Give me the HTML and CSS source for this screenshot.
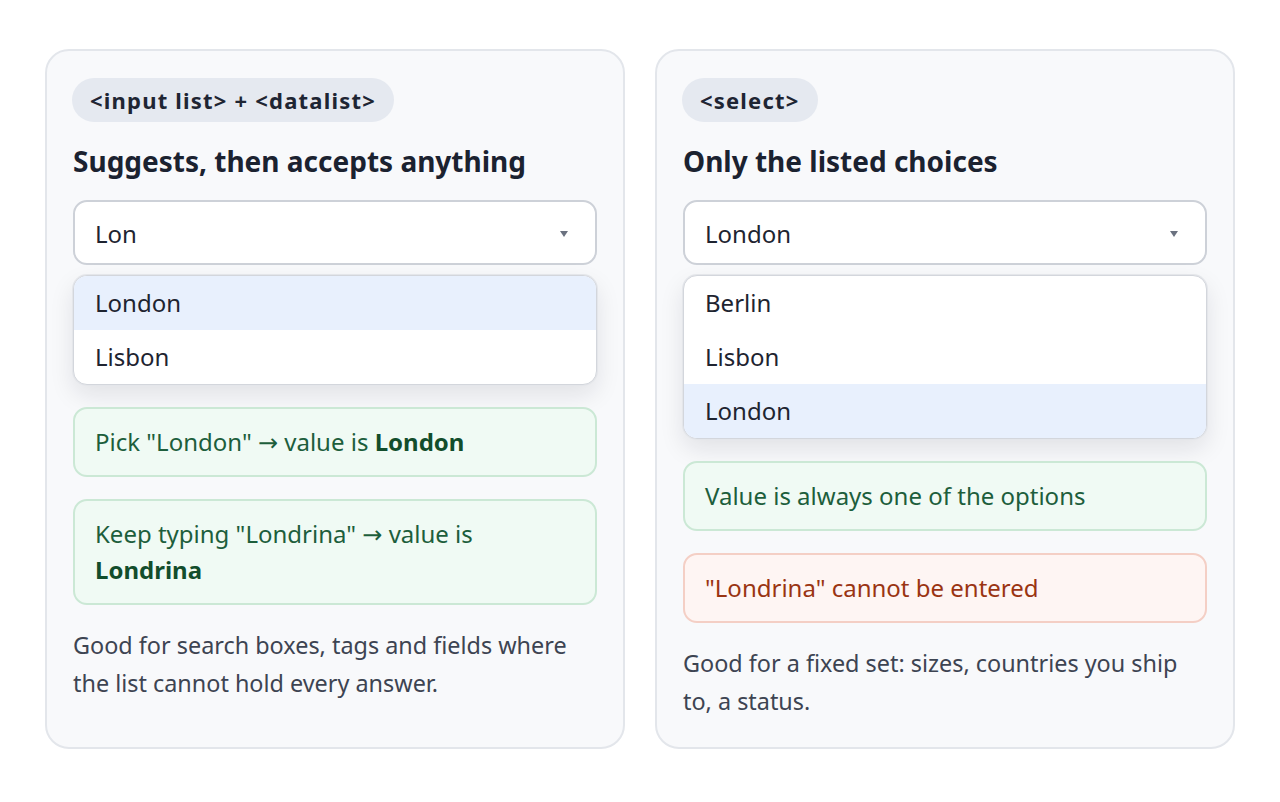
FILE: index.html
```html
<!DOCTYPE html>
<html lang="en">
<head>
<meta charset="utf-8">
<title>datalist vs select</title>
<link rel="stylesheet" href="styles.css">
</head>
<body>
<main class="compare">
  <section class="card">
    <span class="badge">&lt;input list&gt; + &lt;datalist&gt;</span>
    <h2 class="title">Suggests, then accepts anything</h2>
    <div class="field">
      <span class="field-value">Lon</span>
      <svg class="caret" width="10" height="8" viewBox="0 0 10 8"><polygon points="1,1 9,1 5,7" fill="#6b7280"/></svg>
    </div>
    <ul class="menu">
      <li class="option active">London</li>
      <li class="option">Lisbon</li>
    </ul>
    <div class="note ok">Pick "London" → value is <b>London</b></div>
    <div class="note ok">Keep typing "Londrina" → value is <b>Londrina</b></div>
    <p class="desc">Good for search boxes, tags and fields where the list cannot hold every answer.</p>
  </section>
  <section class="card">
    <span class="badge">&lt;select&gt;</span>
    <h2 class="title">Only the listed choices</h2>
    <div class="field">
      <span class="field-value">London</span>
      <svg class="caret" width="10" height="8" viewBox="0 0 10 8"><polygon points="1,1 9,1 5,7" fill="#6b7280"/></svg>
    </div>
    <ul class="menu">
      <li class="option">Berlin</li>
      <li class="option">Lisbon</li>
      <li class="option active">London</li>
    </ul>
    <div class="note ok">Value is always one of the options</div>
    <div class="note bad">"Londrina" cannot be entered</div>
    <p class="desc">Good for a fixed set: sizes, countries you ship to, a status.</p>
  </section>
</main>
</body>
</html>
```

FILE: styles.css
```css
* { box-sizing: border-box; }
html, body { margin: 0; padding: 0; background: #ffffff; }
body {
  font-family: "Noto Sans", "Open Sans", "DejaVu Sans", sans-serif;
  color: #1e2430;
}
.compare {
  display: grid;
  grid-template-columns: 1fr 1fr;
  gap: 30px;
  width: 1190px;
  margin: 49px auto 0;
  align-items: stretch;
}
.card {
  display: flex;
  flex-direction: column;
  align-items: stretch;
  background: #f8f9fb;
  border: 2px solid #e3e6eb;
  border-radius: 24px;
  padding: 27px 26px 27px;
}
.badge {
  align-self: flex-start;
  margin-left: -1px;
  height: 44px;
  line-height: 44px;
  padding: 0 18px;
  background: #e5e9f0;
  border-radius: 22px;
  font-size: 22px;
  letter-spacing: 1.2px;
  font-weight: 700;
  color: #1e2533;
}
.title {
  margin: 21px 0 0;
  font-size: 28px;
  line-height: 36px;
  font-weight: 700;
  color: #1b2230;
}
.field {
  margin-top: 21px;
  height: 65px;
  display: flex;
  align-items: center;
  justify-content: space-between;
  padding: 2px 26px 0 20px;
  background: #ffffff;
  border: 2px solid #cdd1d8;
  border-radius: 14px;
}
.field-value { font-size: 24px; color: #1e2430; }
.caret { display: block; }
.menu {
  list-style: none;
  margin: 10px 0 0;
  padding: 0;
  background: #ffffff;
  border: 1px solid #d3d6dc;
  border-radius: 14px;
  overflow: hidden;
  box-shadow: 0 0 0 1px #e4e6ea, 0 10px 24px rgba(15, 23, 42, 0.10);
}
.option {
  height: 54px;
  line-height: 54px;
  padding: 0 21px;
  font-size: 24px;
  color: #1e2430;
}
.option.active { background: #e8f0fd; }
.note {
  margin-top: 22px;
  padding: 15px 20px;
  border: 2px solid;
  border-radius: 14px;
  font-size: 24px;
  line-height: 36px;
}
.note.ok { background: #f0faf4; border-color: #cbe8d5; color: #1d5e3c; }
.note.ok b { color: #124d2c; }
.note.bad { background: #fef5f3; border-color: #f4cfc5; color: #9a3412; }
.desc {
  margin: 21px 0 0;
  padding-right: 8px;
  font-size: 23.4px;
  line-height: 38px;
  color: #3d4452;
}
```
